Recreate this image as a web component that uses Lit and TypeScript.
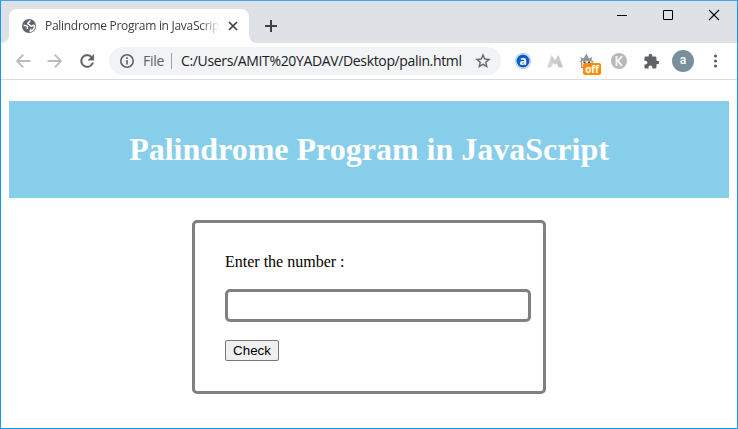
import { LitElement, html, css, svg } from "lit";
import { customElement } from "lit/decorators.js";

const RELOAD = "M17.65 6.35A7.958 7.958 0 0 0 12 4a8 8 0 1 0 7.73 10h-2.08A5.99 5.99 0 0 1 12 18c-3.31 0-6-2.69-6-6s2.69-6 6-6c1.66 0 3.14.69 4.22 1.78L13 11h7V4l-2.35 2.35z";
const PUZZLE = "M20.5 11H19V7c0-1.1-.9-2-2-2h-4V3.5a2.5 2.5 0 0 0-5 0V5H4c-1.1 0-1.99.9-1.99 2v3.8H3.5c1.49 0 2.7 1.21 2.7 2.7s-1.21 2.7-2.7 2.7H2V20c0 1.1.9 2 2 2h3.8v-1.5c0-1.49 1.21-2.7 2.7-2.7s2.7 1.21 2.7 2.7V22H17c1.1 0 2-.9 2-2v-4h1.5a2.5 2.5 0 0 0 0-5z";
const STAR = "M22 9.24l-7.19-.62L12 2 9.19 8.63 2 9.24l5.46 4.73L5.82 21 12 17.27 18.18 21l-1.63-7.03L22 9.24zM12 15.4l-3.76 2.27 1-4.28-3.32-2.88 4.38-.38L12 6.1l1.71 4.04 4.38.38-3.32 2.88 1 4.28L12 15.4z";

const icon = (size: number, box: string, body: unknown) =>
  html`<svg width=${size} height=${size} viewBox=${box}>${body}</svg>`;

@customElement("tab-strip")
class TabStrip extends LitElement {
  static styles = css`
    :host { display: flex; height: 42px; background: #dee1e6; font-family: "Open Sans", sans-serif; }
    svg { display: block; flex: none; }
    .flare { width: 8px; height: 8px; align-self: flex-end; flex: none; }
    .left { background: radial-gradient(circle at 0 0, transparent 7.5px, #fff 8.5px); }
    .right { background: radial-gradient(circle at 100% 0, transparent 7.5px, #fff 8.5px); }
    .tab { width: 240px; height: 34px; margin-top: 8px; box-sizing: border-box; padding: 0 10px 0 11px;
      border-radius: 8px 8px 0 0; background: #fff; display: flex; align-items: center; flex: none; }
    .title { flex: none; width: 178px; margin-left: 7px; font-size: 12px; letter-spacing: -0.29px; line-height: 16px;
      color: #3c4043; white-space: nowrap; overflow: hidden;
      -webkit-mask-image: linear-gradient(90deg, #000 155px, transparent 175px); }
    .close { margin-left: 5px; }
    .add { margin: 19px 0 0 8px; }
    .controls { display: flex; gap: 34px; margin: 8px 17px 0 auto; }
  `;
  render() {
    return html`
      <span class="flare left"></span>
      <div class="tab">
        ${icon(18, "0 0 18 18", svg`<circle cx="9" cy="9" r="7" fill="#5f6368" /><path d="M10.500 3.800C8.800 4.300 9.200 5.600 7.800 6.100 7.500 7.600 9.500 7 10 8.300c.4 1.300 2 .9 2.700.3.5-.5 1.500-.3 1.800.4-.2 2.700-1.700 4.700-4.200 5.300.1-1.300.8-1.700.2-2.500M3.600 8.600c1.500-.2 3.600 0 4 1.100.2 1-.7 1.300-.4 2.300" fill="none" stroke="#fff" stroke-width="1.500" />`)}
        <span class="title">Palindrome Program in JavaScript</span>
        <span class="close">${icon(10, "0 0 10 10", svg`<path d="M1 1l8 8M9 1l-8 8" stroke="#3c4043" stroke-width="1.7" />`)}</span>
      </div>
      <span class="flare right"></span>
      <span class="add">${icon(12, "0 0 12 12", svg`<path d="M6 0v12M0 6h12" stroke="#3c4043" stroke-width="2" />`)}</span>
      <div class="controls">
        ${icon(12, "0 0 12 12", svg`<path d="M1 6.5h10" stroke="#000" />`)}
        ${icon(12, "0 0 12 12", svg`<path d="M1.5 1.5h9v9h-9z" fill="none" stroke="#000" />`)}
        ${icon(12, "0 0 12 12", svg`<path d="M1 1l10 10M11 1L1 11" stroke="#000" stroke-width="1.1" />`)}
      </div>`;
  }
}

@customElement("tool-bar")
class ToolBar extends LitElement {
  static styles = css`
    :host { display: flex; align-items: center; height: 36px; box-sizing: content-box; padding-left: 13px;
      border-bottom: 1px solid #dadce0; background: #fff; font-family: "Open Sans", sans-serif; }
    svg { display: block; flex: none; }
    .nav { display: flex; gap: 14px; align-items: center; }
    .address { width: 392px; height: 28px; margin-left: 11px; padding: 0 9px; box-sizing: border-box; border-radius: 14px;
      background: #f1f3f4; display: flex; align-items: center; flex: none; font-size: 14px; line-height: 18px; white-space: nowrap; }
    .scheme { width: 27px; margin: -1px 0 0 7px; color: #5f6368; letter-spacing: -0.3px; }
    .rule { width: 1px; height: 16px; background: #9aa0a6; margin: 0 9px 0 1px; }
    .url { margin-top: -1px; color: #202124; letter-spacing: -0.35px; width: 293px; }
    .extensions { display: grid; grid-template-columns: repeat(5, 32px); justify-items: center; align-items: center; margin-left: 6px; }
    .guard { position: relative; }
    .badge { position: absolute; left: 4px; top: 10px; width: 18px; height: 12px; border-radius: 2px; background: #ff8c00;
      color: #fff; font: bold 10px/12px "Open Sans", sans-serif; text-align: center; letter-spacing: -0.2px; }
    .avatar { width: 22px; height: 22px; margin-left: 5px; border-radius: 50%; background: #78909c; color: #fff;
      font: 500 12px/21px Roboto, sans-serif; text-align: center; }
    .menu { margin-left: 13px; }
  `;
  render() {
    const arrow = svg`<path d="M16.5 9H3M9.3 2.7L3 9l6.3 6.3" fill="none" stroke="#babcbe" stroke-width="1.8" />`;
    return html`
      <div class="nav">
        ${icon(18, "0 0 18 18", arrow)}
        ${icon(18, "0 0 18 18", svg`<g transform="translate(18 0) scale(-1 1)">${arrow}</g>`)}
        ${icon(20, "1 0 24 24", svg`<path fill="#5f6368" stroke="#5f6368" stroke-width=".5" d=${RELOAD} />`)}
      </div>
      <div class="address">
        ${icon(18, "0 0 18 18", svg`<circle cx="9" cy="9" r="6.2" fill="none" stroke="#5f6368" stroke-width="1.6" /><path d="M9 8v4.5M9 5.3v1.6" stroke="#5f6368" stroke-width="1.6" />`)}
        <span class="scheme">File</span><span class="rule"></span>
        <span class="url">C:/Users/AMIT%20YADAV/Desktop/palin.html</span>
        ${icon(18, "0 0 24 24", svg`<path fill="#5f6368" stroke="#5f6368" stroke-width=".3" d=${STAR} />`)}
      </div>
      <div class="extensions">
        ${icon(16, "0 0 16 16", svg`<circle cx="8" cy="8" r="8" fill="#a9c6ea" /><circle cx="8" cy="8" r="7.2" fill="#edf4fc" /><circle cx="8" cy="8" r="6.5" fill="#0b5cc8" /><text x="8" y="11.7" text-anchor="middle" fill="#fff" font-family="Open Sans" font-weight="bold" font-size="12">a</text>`)}
        ${icon(16, "0 0 16 16", svg`<path d="M0 14.500L4.500 2 8 7.500 4 14.500z" fill="#d6d6d6" /><path d="M16 14.500L11.500 2 8 7.500l4 7z" fill="#c6c6c6" /><path d="M4.500 2L8 8l3.500-6 1.500 5-5 5-4.500-5z" fill="#cecece" />`)}
        <span class="guard">
          ${icon(16, "0 0 16 16", svg`<path d="M2 15V9L.5 8.500 2 7.500 1.500 4l3 1.500L7.500.5l2.500 5 3-1.500-.5 3.500 2.500 1-1.500 1v6z" fill="#969696" /><path d="M3 8h9.500v6H3z" fill="#e4e4e4" /><path d="M4.500 8.500h2v1.500h-2zM9 8.500h2v1.500H9z" fill="#444" />`)}
          <span class="badge">off</span>
        </span>
        ${icon(16, "0 0 16 16", svg`<circle cx="8" cy="8" r="8" fill="#b8b8b8" /><path d="M5.500 3v10M11 3L7 8l4 5" fill="none" stroke="#f5f5f5" stroke-width="2" />`)}
        ${icon(17, "0 0 24 24", svg`<path fill="#5f6368" d=${PUZZLE} />`)}
      </div>
      <span class="avatar">a</span>
      <span class="menu">${icon(18, "0 0 18 18", svg`<g fill="#5f6368"><circle cx="8.5" cy="4" r="1.6" /><circle cx="8.5" cy="9" r="1.6" /><circle cx="8.5" cy="14" r="1.6" /></g>`)}</span>`;
  }
}

@customElement("app-root")
class AppRoot extends LitElement {
  static styles = css`
    :host { display: block; box-sizing: border-box; width: 738px; height: 429px; overflow: hidden;
      border: 1px solid #0c9bf5; border-top-color: #3fa9ee; background: #fff; }
    .page { padding: 21px 8px 0; font: 16px "Liberation Serif", serif; color: #000; }
    .banner { margin: 0; height: 97px; background: skyblue; color: #fff; font-size: 32px; font-weight: bold;
      line-height: 97px; text-align: center; }
    .panel { box-sizing: border-box; width: 354px; height: 174px; margin: 22px auto 0; padding: 30px;
      border: 3px solid gray; border-radius: 5px; }
    .label { display: block; line-height: 18px; }
    .field { display: block; box-sizing: border-box; width: 306px; height: 33px; margin: 18px 0; padding: 0 6px;
      border: 3px solid gray; border-radius: 5px; background: #fff; outline: none; }
    .check { display: block; box-sizing: border-box; width: 54px; height: 21px; padding: 0; border: 1px solid #767676;
      border-radius: 2px; background: #efefef; color: #000; font: 13.333px/19px "Liberation Sans", sans-serif; }
  `;
  render() {
    return html`
      <tab-strip></tab-strip>
      <tool-bar></tool-bar>
      <main class="page">
        <h1 class="banner">Palindrome Program in JavaScript</h1>
        <div class="panel">
          <label class="label" for="number">Enter the number :</label>
          <input class="field" id="number" type="text" />
          <button class="check">Check</button>
        </div>
      </main>`;
  }
}
